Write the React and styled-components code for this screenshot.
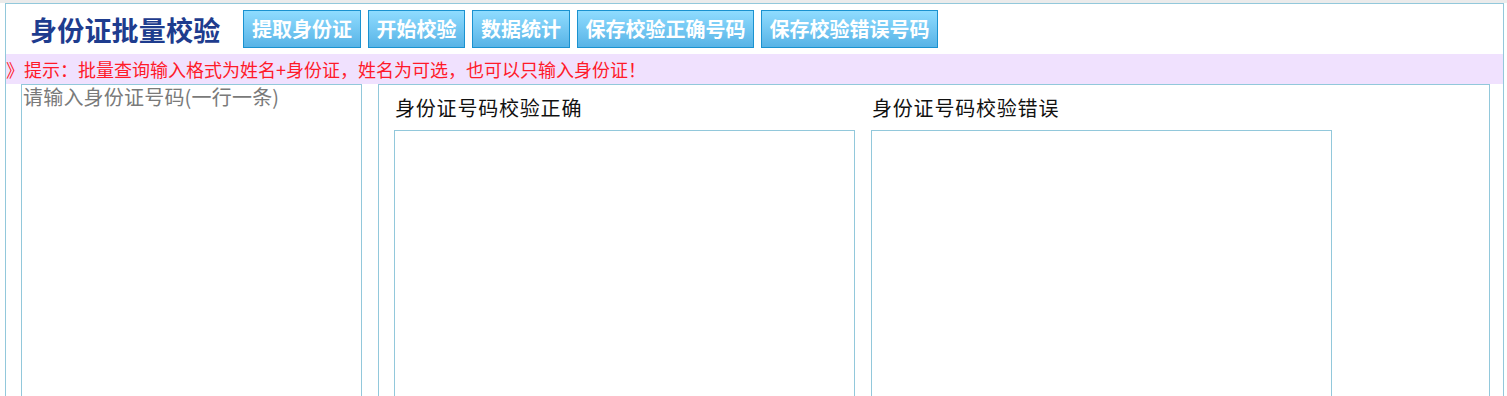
import React from 'react';
import styled, { createGlobalStyle } from 'styled-components';

const GlobalStyle = createGlobalStyle`
  html, body {
    margin: 0;
    padding: 0;
    overflow: hidden;
    background: #fff;
  }
  * { box-sizing: border-box; }
`

const Page = styled.div`
  border-top: 3px solid #ebebeb;
  padding: 0 3px 0 5px;
  font-family: "Noto Sans CJK SC", "Liberation Serif", serif;
`

const Frame = styled.div`
  border: 1px solid #92c8db;
  border-bottom: none;
  height: 420px;
`

const Header = styled.div`
  display: flex;
  align-items: center;
  height: 50px;
  padding-left: 24px;
`

const Title = styled.h1`
  width: 207px;
  margin: 0 6px 0 0;
  font-size: 27px;
  font-weight: bold;
  color: #1e3c8e;
  line-height: 1;
  letter-spacing: 0.2px;
  white-space: nowrap;
`

const Toolbar = styled.div`
  display: flex;
  gap: 7px;
`

const Button = styled.button`
  width: ${p => p.$w}px;
  height: 38px;
  padding: 0;
  border: 1px solid #1a92d0;
  background: linear-gradient(to bottom, #8fdcff, #58b3e6);
  color: #fff;
  font-family: "Noto Sans CJK SC", sans-serif;
  font-size: 20px;
  font-weight: bold;
  line-height: 1;
  cursor: pointer;
`

const Hint = styled.div`
  height: 30px;
  line-height: 30px;
  background: #f0e1fe;
  color: #ff1a2a;
  font-size: 18px;
  white-space: nowrap;
`

const Body = styled.div`
  display: flex;
  gap: 16px;
  padding: 0 13px 0 15px;
`

const InputArea = styled.textarea`
  width: 341px;
  height: 340px;
  margin: 0;
  padding: 1px 1px;
  border: 1px solid #92c8db;
  outline: none;
  resize: none;
  font-family: "Noto Sans CJK SC", sans-serif;
  font-size: 20px;
  line-height: 22px;
  letter-spacing: 0.2px;
  color: #333;
  &::placeholder { color: #7a7a7a; }
`

const ResultPanel = styled.div`
  flex: 1;
  display: flex;
  gap: 16px;
  height: 340px;
  padding: 10px 15px 0;
  border: 1px solid #92c8db;
`

const Column = styled.div`
  display: flex;
  flex-direction: column;
  width: 461px;
`

const Label = styled.div`
  height: 26px;
  line-height: 26px;
  padding-left: 1px;
  font-size: 20px;
  letter-spacing: 0.8px;
  color: #111;
`

const ResultArea = styled.textarea`
  width: 461px;
  flex: 1;
  margin-top: 9px;
  border: 1px solid #92c8db;
  outline: none;
  resize: none;
  font-family: "Noto Sans CJK SC", sans-serif;
  font-size: 16px;
`

const buttons = [
  { label: '提取身份证', width: 118 },
  { label: '开始校验', width: 97 },
  { label: '数据统计', width: 98 },
  { label: '保存校验正确号码', width: 177 },
  { label: '保存校验错误号码', width: 177 },
];

const App = () => (
  <Page>
    <GlobalStyle />
    <Frame>
      <Header>
        <Title>身份证批量校验</Title>
        <Toolbar>
          {buttons.map(b => <Button key={b.label} $w={b.width}>{b.label}</Button>)}
        </Toolbar>
      </Header>
      <Hint>》提示：批量查询输入格式为姓名+身份证，姓名为可选，也可以只输入身份证！</Hint>
      <Body>
        <InputArea placeholder="请输入身份证号码(一行一条)" />
        <ResultPanel>
          <Column>
            <Label>身份证号码校验正确</Label>
            <ResultArea />
          </Column>
          <Column>
            <Label>身份证号码校验错误</Label>
            <ResultArea />
          </Column>
        </ResultPanel>
      </Body>
    </Frame>
  </Page>
);

export default App;
